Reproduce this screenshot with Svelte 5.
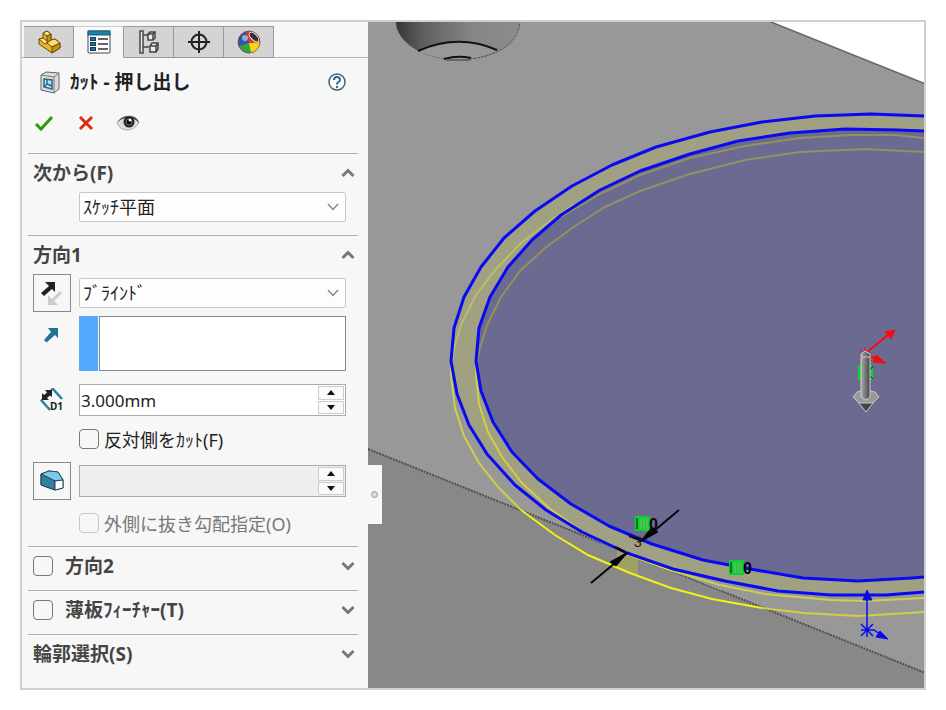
<script>
	let activeTab = $state(1);
	let fromOpen = $state(true);
	let dir1Open = $state(true);
	let dir2Open = $state(false);
	let thinOpen = $state(false);
	let contourOpen = $state(false);
	let depth = $state("3.000mm");

	const tabs = ["フィーチャー", "プロパティ", "コンフィギュレーション", "寸法", "外観"];

	const outerTop = "925,116 871,114 815,116 762,122 710,132 656,147 612,165 572,186 535,211 504,238 481,267 464,297 454,328 451,361 457,394 469,425 487,454 515,485 546,510 582,532 627,553 673,569 725,581 778,591 831,595 886,595 925,592";
	const innerTop = "925,131 898,130 845,129 790,133 738,141 690,154 640,171 600,190 561,215 532,240 508,267 490,297 479,328 476,361 481,391 493,422 512,452 538,479 571,504 609,526 652,544 703,560 750,569 803,578 858,581 912,578 925,577";

	function step(amount) {
		let value = parseFloat(depth) || 0;
		depth = Math.max(0, value + amount).toFixed(3) + "mm";
	}
</script>

{#snippet chevron(open)}
	<svg class="chevron" viewBox="0 0 14 10" aria-hidden="true">
		{#if open}
			<path d="M1.5 8 7 2.5 12.5 8" />
		{:else}
			<path d="M1.5 2 7 7.5 12.5 2" />
		{/if}
	</svg>
{/snippet}

{#snippet spinner(disabled)}
	<span class="spinner">
		<button type="button" aria-label="増やす" {disabled} onclick={() => step(1)}>
			<svg viewBox="0 0 8 5"><path d="M0 5 4 0 8 5Z" /></svg>
		</button>
		<button type="button" aria-label="減らす" {disabled} onclick={() => step(-1)}>
			<svg viewBox="0 0 8 5"><path d="M0 0H8L4 5Z" /></svg>
		</button>
	</span>
{/snippet}

<main>
	<aside class="panel">
		<nav class="tabs">
			{#each tabs as name, i}
				<button type="button" class="tab" class:active={activeTab == i} aria-label={name} onclick={() => (activeTab = i)}>
					<svg viewBox="0 0 24 24" aria-hidden="true">
						{#if i == 0}
							<g stroke="#6b4a10" stroke-width="1" stroke-linejoin="round">
								<path d="M6 3 10 1 14 4V10L18 9 23 13V18L15 23 2 14V9L6 8Z" fill="#e9b52c" />
								<path d="M6 3 10 1 14 4 10 6Z" fill="#ffe680" />
								<path d="M10 6 14 4V10L10 13Z" fill="#c98e18" />
								<path d="M2 9 6 8 10 11V13L8 14Z" fill="#ffe680" />
								<path d="M10 13 14 10 18 9 23 13 15 17Z" fill="#ffdf66" />
								<path d="M15 17 23 13V18L15 23Z" fill="#c98e18" />
							</g>
						{:else if i == 1}
							<rect x="1" y="1" width="22" height="22" rx="1" fill="#fff" stroke="#3d4b55" />
							<rect x="1" y="1" width="22" height="4" fill="#1a80a8" stroke="#1b5c7c" />
							<g fill="#1d7396" stroke="#123f5c">
								<rect x="3.5" y="7.5" width="5" height="3" /><rect x="3.5" y="12.5" width="5" height="3" /><rect x="3.5" y="17.5" width="5" height="3" />
							</g>
							<path d="M11 9H21M11 14H21M11 19H21" stroke="#333" stroke-width="1.5" />
						{:else if i == 2}
							<g fill="#eee" stroke="#444" stroke-width="1.5">
								<path d="M3 1V23H6V1ZM6 5H11M6 17H12" />
								<path d="M11 4 13 2H18V8L16 10H11ZM11 4H16V10M16 4 18 2" />
								<path d="M13 16 15 13H21V19L19 22H13ZM13 16H19V22M19 16 21 13" />
							</g>
						{:else if i == 3}
							<g fill="none" stroke="#222" stroke-width="2"><circle cx="12" cy="12" r="7.5" /><path d="M12 1V23M1 12H23" /></g>
						{:else}
							<circle cx="12" cy="12" r="11" fill="#e22b22" />
							<path d="M12 13 2 16A11 11 0 0 0 14 23Z" fill="#35a33e" />
							<path d="M12 13 14 23A11 11 0 0 0 23 12Z" fill="#f6d51d" />
							<path d="M12 13 2 16A11 11 0 0 1 9 2Z" fill="#2857b0" />
							<path d="M12 13 9 2A11 11 0 0 1 23 12Z" fill="#e53228" />
							<ellipse cx="17" cy="7" rx="3" ry="6" transform="rotate(-45 17 7)" fill="#333" stroke="#eee" />
							<circle cx="8" cy="8" r="3" fill="#fff" opacity=".5" />
							<circle cx="12" cy="12" r="11" fill="none" stroke="#555" stroke-width=".7" />
						{/if}
					</svg>
				</button>
			{/each}
		</nav>

		<header class="title">
			<svg class="feature" viewBox="0 0 20 23" aria-hidden="true">
				<path d="M1 4 6 1 19 2V18L14 22 1 19Z" fill="#ddd" stroke="#666" />
				<path d="M1 4 14 6V22M14 6 19 2" fill="none" stroke="#777" />
				<path d="M4 8 12 9V18L4 16Z" fill="#bde3f2" stroke="#246a8a" stroke-width="1.5" />
				<path d="M7 8V13L12 15M7 13 4 16" fill="none" stroke="#246a8a" stroke-width="1.5" />
			</svg>
			<h1>ｶｯﾄ - 押し出し</h1>
			<button type="button" class="plain" aria-label="ヘルプ">
				<svg class="help" viewBox="0 0 18 18">
					<circle cx="9" cy="9" r="8" fill="#fbfdfe" stroke="#44616f" stroke-width="1.5" />
					<path d="M6 7Q6 4 9 4T12 7Q12 8 10.5 9T9 11V11.5" fill="none" stroke="#286f95" stroke-width="2" />
					<circle cx="9" cy="14" r="1.2" fill="#286f95" />
				</svg>
			</button>
		</header>

		<div class="actions">
			<button type="button" class="plain" aria-label="OK">
				<svg viewBox="0 0 24 20"><path d="M4 11 9 16 20 4" fill="none" stroke="#2c9a0b" stroke-width="3" /></svg>
			</button>
			<button type="button" class="plain" aria-label="キャンセル">
				<svg viewBox="0 0 24 20"><path d="M6 4 18 16M18 4 6 16" fill="none" stroke="#e02b12" stroke-width="3" /></svg>
			</button>
			<button type="button" class="plain" aria-label="プレビュー">
				<svg viewBox="0 0 24 20">
					<path d="M1 10Q5 3 13 3T23 10Q18 17 11 17T1 10Z" fill="#ddd" stroke="#aaa" />
					<path d="M1 10Q5 3 13 3T23 10Q19 5 12 5T1 10Z" fill="#444" />
					<circle cx="13" cy="9" r="5.5" fill="#222" />
					<circle cx="13" cy="9" r="3" fill="#000" stroke="#777" />
					<circle cx="14" cy="7" r="1.5" fill="#fff" />
				</svg>
			</button>
		</div>

		<section>
			<div class="head">
				<h2>次から(F)</h2>
				<button type="button" class="plain" aria-label="次から" aria-expanded={fromOpen} onclick={() => (fromOpen = !fromOpen)}>{@render chevron(fromOpen)}</button>
			</div>
			{#if fromOpen}
				<div class="body">
					<div class="row">
						<span class="lead"></span>
						<span class="drop">
							<select aria-label="開始条件"><option>ｽｹｯﾁ平面</option></select>
							<svg viewBox="0 0 12 8" aria-hidden="true"><path d="M1 1 6 6.5 11 1" /></svg>
						</span>
					</div>
				</div>
			{/if}
		</section>

		<section>
			<div class="head">
				<h2>方向1</h2>
				<button type="button" class="plain" aria-label="方向1" aria-expanded={dir1Open} onclick={() => (dir1Open = !dir1Open)}>{@render chevron(dir1Open)}</button>
			</div>
			{#if dir1Open}
				<div class="body">
					<div class="row">
						<span class="lead">
							<button type="button" class="square" aria-label="反対方向">
								<svg viewBox="0 0 24 24">
									<path d="M5 1H15V11L12 8 4 15 1 12 9 5Z" fill="#222" />
									<path d="M21 11 12 20" stroke="#ccc" stroke-width="3" /><path d="M8 14V24H18Z" fill="#ccc" />
								</svg>
							</button>
						</span>
						<span class="drop">
							<select aria-label="押し出し状態"><option>ﾌﾞﾗｲﾝﾄﾞ</option></select>
							<svg viewBox="0 0 12 8" aria-hidden="true"><path d="M1 1 6 6.5 11 1" /></svg>
						</span>
					</div>
					<div class="row list">
						<span class="lead">
							<svg class="dir" viewBox="0 0 16 16" aria-hidden="true"><path d="M5 1H15V11L12 8 3.500 15.500 1 13 8 5Z" fill="#217393" /></svg>
						</span>
						<span class="swatch"></span>
						<select size="2" aria-label="押し出し方向"></select>
					</div>
					<div class="row">
						<span class="lead">
							<svg class="dim" viewBox="0 0 24 24" aria-hidden="true">
								<path d="M11 2 13 1 22 11M1 12 10 22" fill="none" stroke="#2a7ea3" stroke-width="2.5" />
								<path d="M1 13 5 9" stroke="#2a7ea3" stroke-width="2" />
								<path d="M5 2H12V9L10 7.5 7 10 9 12H2V5L4 7 7 4.500Z" fill="#222" />
								<text x="10" y="22" font-size="10" font-weight="bold" fill="#222">D1</text>
							</svg>
						</span>
						<span class="spin">
							<input type="text" aria-label="深さ" bind:value={depth} />
							{@render spinner(false)}
						</span>
					</div>
					<div class="row">
						<span class="lead"></span>
						<label class="check"><input type="checkbox" />反対側をｶｯﾄ(F)</label>
					</div>
					<div class="row">
						<span class="lead">
							<button type="button" class="square" aria-label="抜き勾配オン/オフ">
								<svg viewBox="0 0 24 24" stroke="#23495c" stroke-linejoin="round">
									<path d="M1 5 9 2 18 3 23 11V19L15 21 1 16Z" fill="#2b7a9c" />
									<path d="M1 5 9 2 18 3 23 11 15 12Z" fill="#79cbe9" />
									<path d="M1 5 15 12V21L1 16Z" fill="#347f9f" />
									<path d="M15 12 23 11V19L15 21Z" fill="#fff" />
								</svg>
							</button>
						</span>
						<span class="spin off">
							<input type="text" aria-label="抜き勾配角度" disabled />
							{@render spinner(true)}
						</span>
					</div>
					<div class="row">
						<span class="lead"></span>
						<label class="check off"><input type="checkbox" disabled />外側に抜き勾配指定(O)</label>
					</div>
				</div>
			{/if}
		</section>

		<section class="closed">
			<div class="head">
				<h2><label><input type="checkbox" />方向2</label></h2>
				<button type="button" class="plain" aria-label="方向2" aria-expanded={dir2Open} onclick={() => (dir2Open = !dir2Open)}>{@render chevron(dir2Open)}</button>
			</div>
		</section>
		<section class="closed">
			<div class="head">
				<h2><label><input type="checkbox" />薄板ﾌｨｰﾁｬｰ(T)</label></h2>
				<button type="button" class="plain" aria-label="薄板フィーチャー" aria-expanded={thinOpen} onclick={() => (thinOpen = !thinOpen)}>{@render chevron(thinOpen)}</button>
			</div>
		</section>
		<section class="closed">
			<div class="head">
				<h2>輪郭選択(S)</h2>
				<button type="button" class="plain" aria-label="輪郭選択" aria-expanded={contourOpen} onclick={() => (contourOpen = !contourOpen)}>{@render chevron(contourOpen)}</button>
			</div>
		</section>
	</aside>

	<div class="viewport">
		<svg class="model" viewBox="368 22 556 666" preserveAspectRatio="xMinYMin slice" role="img" aria-label="モデル">
			<defs>
				<linearGradient id="bore" x1="0" x2="1">
					<stop offset="0" stop-color="#343434" />
					<stop offset=".2" stop-color="#5c5c5c" />
					<stop offset=".6" stop-color="#858585" />
					<stop offset="1" stop-color="#8c8c8c" />
				</linearGradient>
				<linearGradient id="shaft" x1="0" x2="1">
					<stop offset="0" stop-color="#aaa" />
					<stop offset="1" stop-color="#444" />
				</linearGradient>
			</defs>
			<!-- block faces -->
			<rect x="368" y="20" width="560" height="670" fill="#989898" />
			<path d="M368 449 928 674V690H368Z" fill="#888" />
			<path d="M766 20 928 85V20Z" fill="#fff" />
			<path d="M766 20 928 85" stroke="#666" stroke-width="1.5" />

			<!-- drilled hole -->
			<path d="M396 20C395 38 416 58 458 60 498 59 520 42 520 20Z" fill="url(#bore)" stroke="#555" stroke-dasharray="3 1" />
			<path d="M418 51Q458 33 497 50 480 59 458 60 436 59 418 51Z" fill="#989898" />
			<path d="M418 51Q458 33 497 50M444 59Q458 55 471 58" fill="none" stroke="#111" stroke-width="2" />
			<path d="M446 60H470" stroke="#666" stroke-width="2" />

			<!-- ring sketch -->
			<polygon points={outerTop} fill="#a0a082" />
			<polygon points={innerTop} fill="#6b6b91" />
			<clipPath id="below"><path d="M368 440H521L582 534 627 555 673 571 720 590 928 600V690H368Z" /></clipPath>
			<path d="M368 449 928 674" fill="none" stroke="#505050" stroke-width="2" stroke-dasharray="2 1" clip-path="url(#below)" />
			<path d="M617 549 638 558V575L617 567Z" fill="#a0a064" />
			<g fill="none" stroke-width="2">
				<path d="M561 217 600 194 640 175 690 158 745 146 800 138 850 135 895 135 925 138" stroke="#92925f" />
				<path d="M477 361 480 348 487 325 501 297 520 271 545 248 575 226 605 207 640 191 690 174 745 160 800 152 865 149 925 152" stroke="#92925f" />
				<path d="M452 361 455 344 462 323 476 295 496 269 521 243 550 221 575 204" stroke="#bcbc6c" />
				<path d="M451 361V375L455 408 464 436 479 463 499 488 521 510" stroke="#cfcf48" />
				<path d="M476 361V375L479 404 488 432 502 457 522 483 549 508 580 530" stroke="#cfcf48" />
				<path d="M521 510 555 535 588 555 630 573 671 588 712 599 762 608" stroke="#f2f215" />
				<path d="M627 554 673 571" stroke="#f2f215" />
				<path d="M762 608 804 613 858 616 925 612M673 571 720 585 765 594 830 600 865 601 925 598" stroke="#cfcf48" />
			</g>
			<g fill="none" stroke="#0909f2" stroke-width="3" stroke-linejoin="round">
				<polyline points={outerTop} />
				<polyline points={innerTop} />
			</g>

			<!-- relations and wall dimension -->
			{#each [[635, 516], [729, 560]] as [x, y]}
				<rect {x} {y} width="15" height="15" fill="#09d32e" />
				<path d="M{x + 2} {y + 2}v11" stroke="#111" />
				<path d="M{x + 6} {y + 2}v11M{x + 9} {y + 2}v11M{x + 12} {y + 2}v11" stroke="#a3a58c" />
				<text class="mark" x={x + 14} y={y + 14}>0</text>
			{/each}
			<path d="M679 510 642 541M591 583 627 553M629 536 640 540M615 547 625 552" stroke="#050505" stroke-width="2" />
			<path d="M640 542 652 527 658 532ZM628 552 610 562 616 566Z" fill="#050505" stroke="#050505" />
			<text class="size" x="634" y="547">3</text>

			<!-- extrude handle -->
			<path d="M858 365h4v15h-4zM870 365h3v15h-3z" fill="#09d32e" />
			<path d="M870 370 873 366M870 376 873 379" stroke="#111" />
			<g stroke="#f20d0d" stroke-width="2">
				<path d="M866 353 888 335M866 355 878 359" />
				<path d="M860 349 872 361M859 357H864M865 347V355" stroke-width="1" />
				<path d="M895 330 885 332 891 339ZM886 363 876 355 873 362Z" fill="#f20d0d" stroke-width="1" />
			</g>
			<path d="M858 402 866 412 874 402Z" fill="#444" stroke="#ccc" />
			<path d="M853 397 857 392 866 390 875 392 879 397 873 403H859Z" fill="#999" stroke="#c8c8c8" />
			<path d="M861 354 865 351 870 354V397L866 400 861 397Z" fill="url(#shaft)" stroke="#ccc" />
			<path d="M861 357H870" stroke="#ccc" />

			<!-- origin -->
			<g stroke="#0909f2" fill="#0909f2">
				<path d="M867 594V630M861 624 873 636M873 624 861 636M861 630H874L880 634M867 623V637" fill="none" stroke-width="1.5" />
				<path d="M867 590 863 600H872ZM888 639 880 631 876 637Z" />
			</g>
		</svg>
		<button type="button" class="handle" aria-label="パネルを閉じる"></button>
	</div>
</main>

<style>
	:global(body) {
		background: #fff;
	}

	main {
		display: flex;
		box-sizing: border-box;
		min-height: calc(100vh - 40px);
		margin: 20px;
		border: 2px solid #d0d0d0;
		font-family: "Noto Sans", "Noto Sans CJK JP", sans-serif;
		font-size: 18px;
		color: #222;
	}

	button, input, select {
		box-sizing: border-box;
		margin: 0;
		font: inherit;
		color: inherit;
	}

	svg {
		display: block;
	}

	.panel {
		flex: 0 0 346px;
		box-sizing: border-box;
		min-width: 0;
		padding-top: 4px;
		background: #f7f7f7;
	}

	.tabs {
		display: flex;
		height: 32px;
		padding-left: 2px;
		box-shadow: inset 0 -1px #b4b4b4;
	}

	.tab {
		display: grid;
		place-items: center;
		width: 50px;
		padding: 0;
		background: #d4d4d4;
		border: 1px solid #999;
		border-left: 0;
	}

	.tab.active {
		background: #f7f7f7;
		border-top-color: #ccc;
		border-bottom-color: #f7f7f7;
	}

	.tab svg {
		width: 24px;
		height: 24px;
	}

	.plain {
		padding: 0;
		border: 0;
		background: none;
	}

	.title {
		display: flex;
		align-items: center;
		height: 48px;
		padding: 0 22px 0 18px;
		gap: 10px;
	}

	.feature {
		width: 20px;
		height: 23px;
	}

	h1, h2 {
		flex: 1;
		margin: 0;
		font-size: 19px;
		line-height: 24px;
		font-weight: bold;
	}

	h2 {
		color: #444;
	}

	.help {
		width: 18px;
		height: 18px;
	}

	.actions {
		display: flex;
		align-items: center;
		gap: 18px;
		height: 34px;
		padding: 0 10px 13px;
	}

	.actions svg {
		width: 24px;
		height: 20px;
	}

	section {
		margin: 0 10px 0 6px;
		border-top: 1px solid #b0b0b0;
	}

	.closed {
		padding-bottom: 5px;
	}

	.head {
		display: flex;
		align-items: center;
		height: 38px;
		padding: 0 3px 0 5px;
	}

	.head label {
		display: flex;
		align-items: center;
		gap: 12px;
	}

	.chevron {
		width: 14px;
		height: 10px;
	}

	.chevron path {
		fill: none;
		stroke: #777;
		stroke-width: 3;
	}

	.body {
		display: flex;
		flex-direction: column;
		gap: 13px;
		padding: 0 12px 13px 5px;
	}

	.row {
		display: flex;
		align-items: center;
	}

	.lead {
		display: flex;
		flex: 0 0 46px;
		justify-content: flex-start;
	}

	.square {
		display: grid;
		place-items: center;
		width: 38px;
		height: 38px;
		padding: 0;
		background: #f7f7f7;
		border: 1px solid #888;
	}

	.square svg {
		width: 24px;
		height: 24px;
	}

	.dir {
		width: 16px;
		height: 16px;
		margin: 11px 10px;
	}

	.dim {
		width: 24px;
		height: 24px;
		margin-left: 7px;
	}

	.drop {
		display: grid;
		flex: 1;
		align-items: center;
	}

	.drop select {
		grid-area: 1 / 1;
		appearance: none;
		width: 100%;
		height: 30px;
		padding: 0 3px;
		background: #fdfdfd;
		border: 1px solid #c8c8c8;
		border-radius: 2px;
	}

	.drop svg {
		grid-area: 1 / 1;
		justify-self: end;
		width: 12px;
		height: 8px;
		margin-right: 7px;
		pointer-events: none;
	}

	.drop path {
		fill: none;
		stroke: #888;
		stroke-width: 1.5;
	}

	.list {
		align-items: stretch;
		height: 55px;
		margin-top: -9px;
	}

	.swatch {
		flex: 0 0 19px;
		margin-right: 1px;
		background: #55a9fc;
	}

	.list select {
		flex: 1;
		min-width: 0;
		appearance: none;
		background: #fff;
		border: 1px solid #8488a4;
		border-radius: 0;
	}

	.spin {
		display: flex;
		flex: 1;
		box-sizing: border-box;
		min-width: 0;
		height: 32px;
		padding: 1px;
		background: #fff;
		border: 1px solid #aaaab0;
	}

	.spin.off {
		background: #eee;
	}

	.spin input {
		flex: 1;
		min-width: 0;
		padding: 0;
		background: none;
		border: 0;
		font-size: 17px;
	}

	.spinner {
		display: flex;
		flex: 0 0 26px;
		flex-direction: column;
		gap: 1px;
	}

	.spinner button {
		display: grid;
		flex: 1;
		place-items: center;
		min-height: 0;
		padding: 0;
		background: #fafafa;
		border: 1px solid #ccc;
	}

	.spinner svg {
		width: 8px;
		height: 5px;
		fill: #111;
	}

	.check {
		display: flex;
		align-items: center;
		gap: 5px;
		height: 20px;
		white-space: nowrap;
	}

	.check.off {
		color: #777;
	}

	input[type="checkbox"] {
		appearance: none;
		width: 20px;
		height: 20px;
		background: #f7f7f7;
		border: 1px solid #777;
		border-radius: 4px;
	}

	input[type="checkbox"]:checked {
		background: #217393;
	}

	input[type="checkbox"]:disabled {
		border-color: #c8c8c8;
	}

	.viewport {
		position: relative;
		display: flex;
		flex: 1;
		min-width: 0;
		background: #888;
	}

	.model {
		flex: 1;
		width: 100%;
		min-width: 0;
	}

	.mark {
		font: bold 16px "Liberation Sans", sans-serif;
		fill: #050505;
	}

	.size {
		font: italic 14px "Liberation Sans", sans-serif;
		fill: #111;
	}

	/* grip that lies over the left edge of the view */
	.handle {
		position: absolute;
		top: 443px;
		left: -1px;
		display: grid;
		place-items: center;
		width: 15px;
		height: 59px;
		padding: 0;
		background: #f7f7f7;
		border: 0;
	}

	.handle::after {
		content: "";
		width: 5px;
		height: 5px;
		background: #ddd;
		border: 1px solid #999;
		border-radius: 50%;
	}
</style>
